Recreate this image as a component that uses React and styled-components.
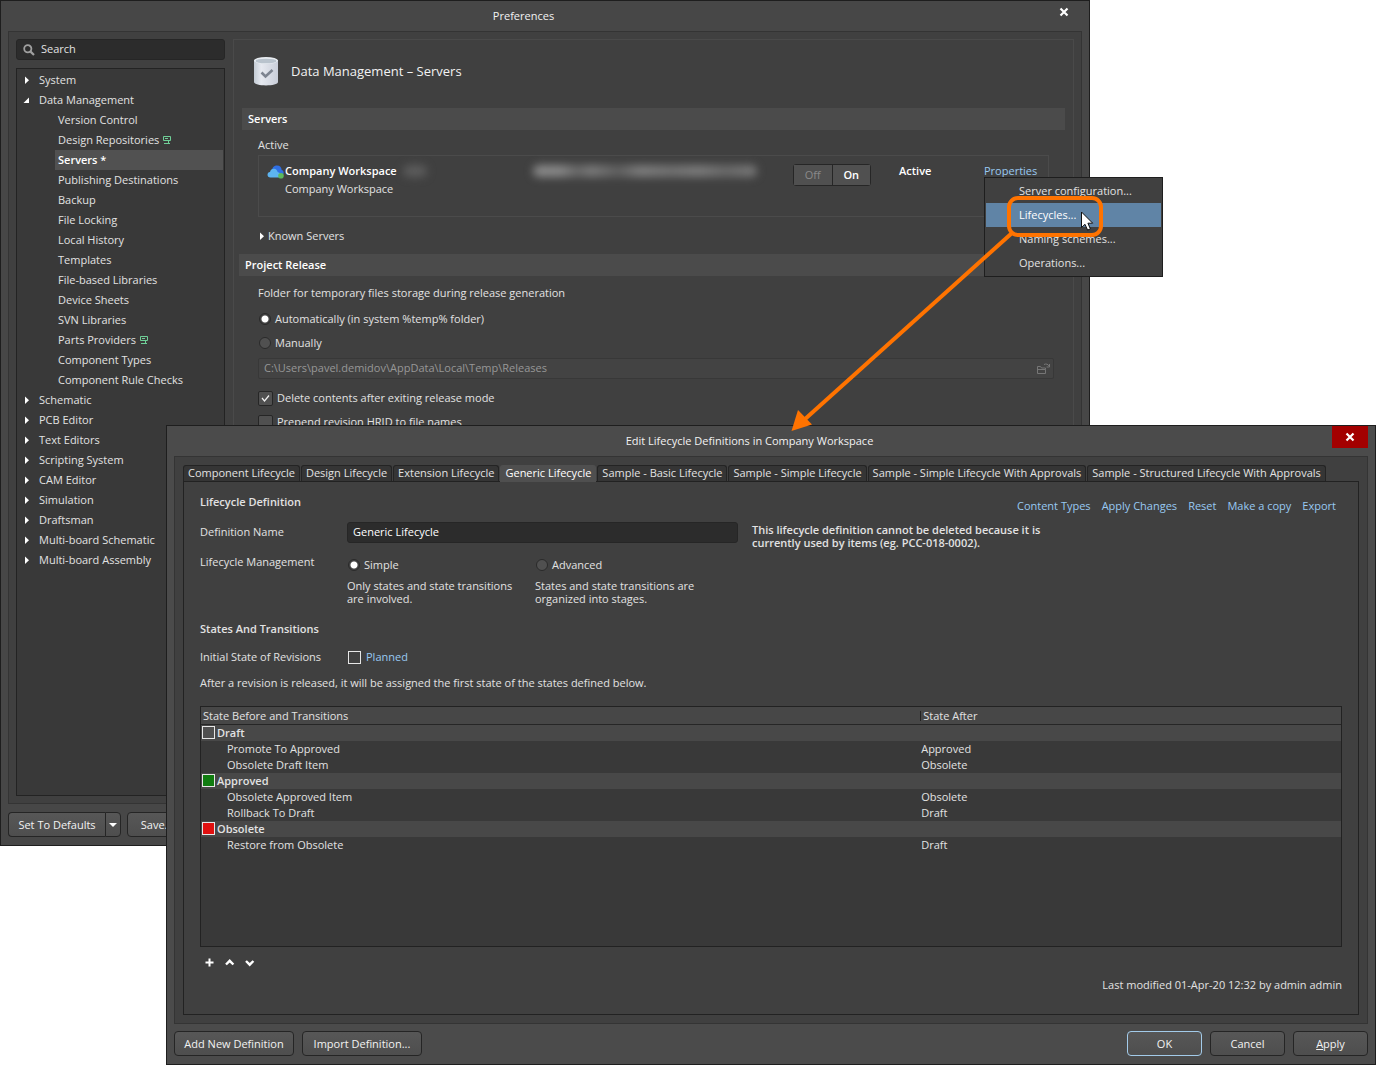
import React from 'react'
import styled, { createGlobalStyle, css } from 'styled-components'

const GlobalStyle = createGlobalStyle`
    * {
        box-sizing: border-box;
    }
    body {
        margin: 0;
        background: #ffffff;
        color: #e2e2e2;
        font-family: "Open Sans", "Noto Sans", sans-serif;
        font-size: 11px;
        line-height: 18px;
    }
    button, input {
        font: inherit;
        color: inherit;
        margin: 0;
    }
    h1, h2, p, ul {
        margin: 0;
        padding: 0;
        font-size: inherit;
        font-weight: inherit;
    }
    ul {
        list-style: none;
    }
    svg {
        display: block;
        flex: none;
    }
`

const Desktop = styled.div`
    position: relative;
    min-height: 100vh;
    padding: 425px 0 0 166px;
`

const Window = styled.section`
    display: flex;
    flex-direction: column;
    border: 1px solid #1e1e1e;
    background: #4b4b4b;
`

const PreferencesWindow = styled(Window)`
    position: absolute;
    top: 0;
    left: 0;
    right: 286px;
    background: #474747;
`

const DialogWindow = styled(Window)`
    position: relative;
    z-index: 1;
    min-height: calc(100vh - 425px);
`

const TitleBar = styled.header`
    display: flex;
    height: 30px;
    padding-right: 7px;
`

const Title = styled.h1`
    flex: 1;
    text-align: center;
    line-height: 30px;
    color: #f2f2f2;
`

const CloseButton = styled.button`
    display: flex;
    align-items: center;
    justify-content: center;
    width: 36px;
    height: 22px;
    padding: 0;
    border: none;
    background: ${p => (p.$danger ? '#a30000' : 'transparent')};
`

const Frame = styled.div`
    display: flex;
    flex: 1;
    margin: 0 7px;
    padding: ${p => p.$pad}px;
    border: 1px solid #343434;
    background: #404040;
`

const Footer = styled.footer`
    display: flex;
    gap: ${p => p.$gap}px;
    padding: ${p => p.$top}px 7px 8px;
`

const Spacer = styled.div`
    flex: 1;
`

const Button = styled.button`
    width: ${p => p.$width}px;
    height: 25px;
    padding: 0;
    border: 1px solid ${p => (p.$primary ? '#a3cbea' : '#252525')};
    border-radius: 4px;
    background: linear-gradient(#575757, #4e4e4e);
    color: #f2f2f2;
    text-align: center;
`

const SplitButton = styled.div`
    display: flex;
    ${Button}:first-child {
        border-radius: 4px 0 0 4px;
        border-right: none;
    }
    ${Button}:last-child {
        border-radius: 0 4px 4px 0;
        display: flex;
        align-items: center;
        justify-content: center;
    }
`

const Sidebar = styled.nav`
    display: flex;
    flex-direction: column;
    gap: 8px;
    width: 209px;
    margin-right: 8px;
`

const SearchBox = styled.label`
    display: flex;
    align-items: center;
    height: 21px;
    padding-left: 6px;
    gap: 6px;
    border: 1px solid #262626;
    border-radius: 3px;
    background: #2c2c2c;
    input {
        flex: 1;
        min-width: 0;
        padding: 0 0 2px;
        border: none;
        outline: none;
        background: none;
        &::placeholder {
            color: #e2e2e2;
            opacity: 1;
        }
    }
`

const Tree = styled.ul`
    flex: 1;
    min-height: 728px;
    padding: 1px 0;
    border: 1px solid #232323;
    background: #393939;
`

const TreeRow = styled.li`
    display: flex;
    align-items: center;
    height: 20px;
    gap: 6px;
    padding-left: 6px;
    ${p => p.$nested && css`
        margin: 0 1px 0 38px;
        padding-left: 3px;
        gap: 4px;
    `}
    ${p => p.$selected && css`
        background: #515151;
        color: #ffffff;
        font-weight: 600;
    `}
`

const SettingsPanel = styled.main`
    flex: 1;
    min-width: 0;
    padding: 0 8px 0 5px;
    border: 1px solid #4a4a4a;
    border-bottom: none;
`

const PanelHeading = styled.div`
    display: flex;
    align-items: center;
    height: 62px;
    margin-bottom: 6px;
    padding-left: 15px;
    gap: 13px;
    font-size: 13px;
    color: #f2f2f2;
`

const ServersSection = styled.section`
    padding-left: 3px;
`

const ReleaseSection = styled.section`
    padding-right: 3px;
`

const SectionTitle = styled.h2`
    height: 22px;
    padding-left: 6px;
    line-height: 22px;
    background: #4b4b4b;
    color: #ffffff;
    font-weight: 600;
`

const ServersBody = styled.div`
    padding: 6px 16px 8px;
`

const ServerCard = styled.div`
    display: flex;
    height: 62px;
    margin: 1px 0 9px;
    padding: 6px 0 0 8px;
    border: 1px solid #4b4b4b;
`

const ServerName = styled.div`
    display: flex;
    flex: 1;
    min-width: 0;
    svg {
        margin-top: 3px;
    }
    strong {
        display: flex;
        gap: 6px;
        color: #ffffff;
        font-weight: 600;
    }
`

const Redacted = styled.span`
    width: ${p => p.$width}px;
    height: 12px;
    margin-top: 3px;
    border-radius: 6px;
    background: ${p => p.$color};
    filter: blur(4px);
`

const ServerCell = styled.div`
    position: relative;
    width: ${p => p.$width}px;
    color: #ffffff;
    font-weight: ${p => (p.$bold ? 600 : 'normal')};
`

const Toggle = styled.div`
    display: flex;
    width: 78px;
    margin-top: 2px;
    border: 1px solid #262626;
    border-radius: 3px;
`

const ToggleButton = styled.button`
    flex: 1;
    height: 20px;
    padding: 0;
    border: none;
    background: #505050;
    color: ${p => (p.$on ? '#ffffff' : '#8a8a8a')};
    font-weight: ${p => (p.$on ? 600 : 'normal')};
    & + & {
        border-left: 1px solid #262626;
    }
`

const Link = styled.a`
    color: #98c9f2;
    text-decoration: none;
    white-space: nowrap;
`

const Expander = styled.button`
    display: flex;
    align-items: center;
    height: 20px;
    padding: 0;
    border: none;
    background: none;
`

const ReleaseBody = styled.div`
    padding: 8px 8px 0 19px;
`

const OptionRow = styled.label`
    display: flex;
    align-items: center;
    gap: 4px;
    height: ${p => p.$height || 24}px;
    ${p => p.$indent && css`
        padding-left: 1px;
    `}
`

const OptionGroup = styled.div`
    margin: 5px 0 3px;
`

const Radio = styled.input.attrs({ type: 'radio' })`
    appearance: none;
    width: 12px;
    height: 12px;
    border: 1px solid #2a2a2a;
    border-radius: 50%;
    background: #505050;
    &:checked {
        background: radial-gradient(circle, #ffffff 3px, #444444 4px);
    }
`

const Checkbox = styled.span`
    position: relative;
    display: flex;
    align-items: center;
    justify-content: center;
    width: 15px;
    height: 15px;
    input {
        position: absolute;
        inset: 0;
        appearance: none;
        border: 1px solid #262626;
        border-radius: 2px;
        background: #505050;
    }
    svg {
        position: relative;
        pointer-events: none;
    }
`

const PathField = styled.div`
    display: flex;
    align-items: center;
    height: 21px;
    margin-bottom: 7px;
    padding: 0 2px 0 5px;
    border: 1px solid #383838;
    border-radius: 2px;
    background: #434343;
    input {
        flex: 1;
        min-width: 0;
        padding: 0 0 2px;
        border: none;
        background: none;
        color: #979797;
    }
`

const Menu = styled.ul`
    position: absolute;
    z-index: 2;
    top: 15px;
    left: 0;
    width: 179px;
    padding: 1px;
    border: 1px solid #1e1e1e;
    background: #404040;
`

const MenuItem = styled.button`
    display: block;
    width: 100%;
    height: 24px;
    padding: 0 0 0 33px;
    border: none;
    background: ${p => (p.$active ? '#6084a6' : 'transparent')};
    color: ${p => (p.$active ? '#ffffff' : '#e2e2e2')};
    text-align: left;
`

const Callout = styled.svg`
    position: absolute;
    top: 17px;
    left: -200px;
    pointer-events: none;
`

const TabArea = styled.div`
    display: flex;
    flex-direction: column;
    flex: 1;
    min-width: 0;
`

const Tabs = styled.div`
    display: flex;
    gap: 1px;
    height: 16px;
`

const Tab = styled.button`
    height: 16px;
    padding: 0 4px 2px;
    border: 1px solid #242424;
    border-bottom: none;
    border-radius: 3px 3px 0 0;
    background: #353535;
    line-height: 14px;
    white-space: nowrap;
    ${p => p.$active && css`
        z-index: 1;
        height: 17px;
        padding-bottom: 3px;
        border-color: #4f4f4f;
        background: #4f4f4f;
        color: #ffffff;
    `}
`

const TabPanel = styled.div`
    display: flex;
    flex-direction: column;
    flex: 1;
    padding: 11px 16px 20px;
    border: 1px solid #222222;
    background: #404040;
`

const PanelTop = styled.div`
    display: flex;
    justify-content: space-between;
    height: 22px;
    margin-bottom: 7px;
`

const Actions = styled.div`
    display: flex;
    align-self: flex-end;
    gap: 11px;
    padding-right: 6px;
`

const Subheading = styled.h2`
    font-weight: 600;
`

const FormRow = styled.div`
    display: grid;
    grid-template-columns: 147px 391px 1fr;
    min-height: ${p => p.$height}px;
    > label {
        line-height: 20px;
    }
`

const NameInput = styled.input`
    height: 21px;
    padding: 0 5px 2px;
    border: 1px solid #262626;
    border-radius: 3px;
    background: #2c2c2c;
    color: #ffffff;
`

const Note = styled.p`
    max-width: 320px;
    padding: 1px 0 0 14px;
    line-height: 13px;
    font-weight: 600;
`

const Modes = styled.div`
    display: grid;
    grid-template-columns: 188px 188px;
    padding-top: 3px;
    p {
        max-width: 172px;
        margin-top: 5px;
        line-height: 13px;
    }
`

const InitialState = styled.div`
    display: flex;
    align-items: center;
    gap: 5px;
    margin: 10px 0 8px;
    line-height: 18px;
    > span:first-child {
        width: 143px;
    }
`

const Swatch = styled.span`
    flex: none;
    width: 13px;
    height: 13px;
    border: 1px solid #e6e6e6;
    background: ${p => p.$color};
`

const TableBox = styled.div`
    flex: 1;
    min-height: 160px;
    margin-top: 14px;
    border: 1px solid #222222;
    background: #393939;
`

const StatesTable = styled.table`
    width: 100%;
    border-spacing: 0;
    table-layout: fixed;
    line-height: 16px;
    th, td {
        height: 16px;
        padding: 0 0 0 2px;
        text-align: left;
    }
    thead th {
        height: 18px;
        border-bottom: 1px solid #262626;
        background: #474747;
        font-weight: normal;
        line-height: 17px;
    }
    thead th:first-child {
        width: 63%;
    }
    thead th + th {
        background: linear-gradient(#222222, #222222) 1px 4px / 1px 10px no-repeat #474747;
        padding-left: 4px;
    }
    tbody th {
        padding-left: 1px;
        background: #484848;
        font-weight: 600;
    }
    tbody td:first-child {
        padding-left: 26px;
    }
`

const StateName = styled.span`
    display: flex;
    align-items: center;
    height: 16px;
    gap: 2px;
    ${Swatch} {
        margin-bottom: 1px;
    }
`

const Toolbar = styled.div`
    display: flex;
    margin: 6px 0 3px;
    button {
        display: flex;
        align-items: center;
        justify-content: center;
        width: 20px;
        height: 20px;
        padding: 0;
        border: none;
        background: none;
    }
`

const Modified = styled.p`
    text-align: right;
`

const TREE = [
    { label: 'System' },
    {
        label: 'Data Management',
        children: [
            { label: 'Version Control' },
            { label: 'Design Repositories', badge: true },
            { label: 'Servers *', selected: true },
            { label: 'Publishing Destinations' },
            { label: 'Backup' },
            { label: 'File Locking' },
            { label: 'Local History' },
            { label: 'Templates' },
            { label: 'File-based Libraries' },
            { label: 'Device Sheets' },
            { label: 'SVN Libraries' },
            { label: 'Parts Providers', badge: true },
            { label: 'Component Types' },
            { label: 'Component Rule Checks' },
        ],
    },
    { label: 'Schematic' },
    { label: 'PCB Editor' },
    { label: 'Text Editors' },
    { label: 'Scripting System' },
    { label: 'CAM Editor' },
    { label: 'Simulation' },
    { label: 'Draftsman' },
    { label: 'Multi-board Schematic' },
    { label: 'Multi-board Assembly' },
]

const TABS = [
    'Component Lifecycle',
    'Design Lifecycle',
    'Extension Lifecycle',
    'Generic Lifecycle',
    'Sample - Basic Lifecycle',
    'Sample - Simple Lifecycle',
    'Sample - Simple Lifecycle With Approvals',
    'Sample - Structured Lifecycle With Approvals',
]

const STATES = [
    {
        name: 'Draft',
        color: '#505050',
        transitions: [['Promote To Approved', 'Approved'], ['Obsolete Draft Item', 'Obsolete']],
    },
    {
        name: 'Approved',
        color: '#107c10',
        transitions: [['Obsolete Approved Item', 'Obsolete'], ['Rollback To Draft', 'Draft']],
    },
    {
        name: 'Obsolete',
        color: '#e01010',
        transitions: [['Restore from Obsolete', 'Draft']],
    },
]

const CloseIcon = () => (
    <svg width="10" height="10" viewBox="0 0 10 10" stroke="#fff" strokeWidth="2.2">
        <path d="M1.5 1.5l7 7M8.5 1.5l-7 7" />
    </svg>
)

const ArrowIcon = ({ open }) => (
    <svg width="10" height="10" viewBox="0 0 10 10" fill="#fff">
        {open ? <path d="M6 2.500v5.500H.5z" /> : <path d="M2 1.500L6 5.300 2 9z" />}
    </svg>
)

const SearchIcon = () => (
    <svg width="12" height="12" viewBox="0 0 12 12" fill="none" stroke="#a0a0a0">
        <circle cx="4.8" cy="4.8" r="3.6" strokeWidth="1.800" />
        <path d="M7.6 7.6l3.4 3.4" strokeWidth="2.200" />
    </svg>
)

const BadgeIcon = () => (
    <svg width="8" height="8" viewBox="0 0 8 8" fill="none" stroke="#6fcf97">
        <path d="M.5.5h7v4h-7zM2 2.500h3M5.500 4.500v3M1 7.500h6" />
    </svg>
)

const DatabaseIcon = () => (
    <svg width="24" height="29" viewBox="0 0 24 29">
        <defs>
            <linearGradient id="drum" x1="0" x2="1" y1="0" y2="0">
                <stop offset="0" stopColor="#c3cbd4" />
                <stop offset="0.3" stopColor="#e6e9f0" />
                <stop offset="1" stopColor="#c9ced9" />
            </linearGradient>
        </defs>
        <path d="M0 3v22c0 4.500 24 4.500 24 0V3z" fill="url(#drum)" />
        <ellipse cx="12" cy="3.500" rx="12" ry="3.500" fill="#e9edf2" />
        <ellipse cx="12" cy="4" rx="10.500" ry="2.300" fill="#b9c3cd" />
        <path d="M7.500 15.500l4 4 7-6.500" fill="none" stroke="#7d8490" strokeWidth="2.6" />
    </svg>
)

const CloudIcon = () => (
    <svg width="18" height="14" viewBox="0 0 18 14">
        <path d="M5 6C5 2 7.500.5 10 .5c3 0 4.500 2 4.700 4.500C16.500 5.500 17 7 16.500 9L11 12z" fill="#2f6fe4" />
        <path d="M3.500 12.500C1.500 12.500.5 11.200.5 9.700c0-1.500 1-2.500 2.500-2.700C3.500 4.800 5 3.700 7 3.800c2 .1 3.300 1.400 3.600 3.200 1.500.3 3.400 1.500 3.400 5.500z" fill="#5db4f0" />
        <circle cx="14" cy="10.800" r="2.800" fill="#5bb85d" />
    </svg>
)

const FolderIcon = () => (
    <svg width="14" height="12" viewBox="0 0 14 12" fill="none" stroke="#767676">
        <path d="M.5 10.500v-7h3l1 1.500h4v1.500M.5 10.500h8v-4h-8M7 1.500c2-1 4-.5 5.500 2M12.500 1v3h-3" />
    </svg>
)

const CheckIcon = () => (
    <svg width="9" height="9" viewBox="0 0 9 9" fill="none" stroke="#f0f0f0">
        <path d="M1 4l2.500 3L8 1.500" strokeWidth="1.200" />
    </svg>
)

const NavTree = () => (
    <Tree>
        {TREE.map(group => (
            <React.Fragment key={group.label}>
                <TreeRow>
                    <ArrowIcon open={Boolean(group.children)} />
                    {group.label}
                </TreeRow>
                {(group.children || []).map(item => (
                    <TreeRow key={item.label} $nested $selected={item.selected}>
                        {item.label}
                        {item.badge && <BadgeIcon />}
                    </TreeRow>
                ))}
            </React.Fragment>
        ))}
    </Tree>
)

const PropertiesMenu = () => (
    <Menu>
        <li><MenuItem>Server configuration...</MenuItem></li>
        <li><MenuItem $active>Lifecycles...</MenuItem></li>
        <li><MenuItem>Naming schemes...</MenuItem></li>
        <li><MenuItem>Operations...</MenuItem></li>
        <Callout width="320" height="240" viewBox="785 195 320 240">
            <rect x="1009" y="198" width="92" height="37" rx="9" fill="none" stroke="#ff7300" strokeWidth="4" />
            <path d="M1012 233L804 420" stroke="#ff7300" strokeWidth="4" />
            <path d="M791.500 431l6.500-21 14 14.500z" fill="#ff7300" />
            <path
                d="M1081.500 212v15.500l3.500-3.200 2.600 5.800 2.800-1.200-2.500-5.700h4.800z"
                fill="#fff"
                stroke="#111"
            />
        </Callout>
    </Menu>
)

const Preferences = () => (
    <PreferencesWindow>
        <TitleBar>
            <Title>Preferences</Title>
            <CloseButton aria-label="Close preferences"><CloseIcon /></CloseButton>
        </TitleBar>
        <Frame $pad={7}>
            <Sidebar>
                <SearchBox>
                    <SearchIcon />
                    <input placeholder="Search" aria-label="Search" />
                </SearchBox>
                <NavTree />
            </Sidebar>
            <SettingsPanel>
                <PanelHeading>
                    <DatabaseIcon />
                    Data Management – Servers
                </PanelHeading>
                <ServersSection>
                    <SectionTitle>Servers</SectionTitle>
                    <ServersBody>
                        Active
                        <ServerCard>
                            <ServerName>
                                <CloudIcon />
                                <div>
                                    <strong>
                                        Company Workspace
                                        <Redacted $width={24} $color="#5c5c5c" />
                                    </strong>
                                    Company Workspace
                                </div>
                            </ServerName>
                            <ServerCell $width={260}>
                                <Redacted
                                    as="div"
                                    $width={224}
                                    $color="linear-gradient(90deg, #8a8a8a 12%, #686868 20%, #7c7c7c 26%, #606060 38%, #7e7e7e 48%, #727272 62%, #7c7c7c 74%, #6a6a6a 86%, #7a7a7a)"
                                />
                            </ServerCell>
                            <ServerCell $width={106}>
                                <Toggle>
                                    <ToggleButton>Off</ToggleButton>
                                    <ToggleButton $on>On</ToggleButton>
                                </Toggle>
                            </ServerCell>
                            <ServerCell $width={85} $bold>Active</ServerCell>
                            <ServerCell $width={64}>
                                <Link href="#properties">Properties</Link>
                                <PropertiesMenu />
                            </ServerCell>
                        </ServerCard>
                        <Expander><ArrowIcon />Known Servers</Expander>
                    </ServersBody>
                </ServersSection>
                <ReleaseSection>
                    <SectionTitle>Project Release</SectionTitle>
                    <ReleaseBody>
                        <p>Folder for temporary files storage during release generation</p>
                        <OptionGroup>
                            <OptionRow $indent>
                                <Radio name="folder" defaultChecked />
                                Automatically (in system %temp% folder)
                            </OptionRow>
                            <OptionRow $indent>
                                <Radio name="folder" />
                                Manually
                            </OptionRow>
                        </OptionGroup>
                        <PathField>
                            <input
                                aria-label="Release folder"
                                defaultValue="C:\Users\pavel.demidov\AppData\Local\Temp\Releases"
                                disabled
                            />
                            <FolderIcon />
                        </PathField>
                        <OptionRow>
                            <Checkbox><input type="checkbox" defaultChecked /><CheckIcon /></Checkbox>
                            Delete contents after exiting release mode
                        </OptionRow>
                        <OptionRow>
                            <Checkbox><input type="checkbox" /></Checkbox>
                            Prepend revision HRID to file names
                        </OptionRow>
                    </ReleaseBody>
                </ReleaseSection>
            </SettingsPanel>
        </Frame>
        <Footer $gap={6} $top={8}>
            <SplitButton>
                <Button $width={97}>Set To Defaults</Button>
                <Button $width={16} aria-label="More defaults">
                    <svg width="8" height="4" viewBox="0 0 8 4" fill="#fff"><path d="M0 0h8L4 4z" /></svg>
                </Button>
            </SplitButton>
            <Button $width={60}>Save...</Button>
        </Footer>
    </PreferencesWindow>
)

const StateRows = ({ state }) => (
    <>
        <tr>
            <th colSpan={2}>
                <StateName><Swatch $color={state.color} />{state.name}</StateName>
            </th>
        </tr>
        {state.transitions.map(([name, after]) => (
            <tr key={name}>
                <td>{name}</td>
                <td>{after}</td>
            </tr>
        ))}
    </>
)

const LifecycleDialog = () => (
    <DialogWindow>
        <TitleBar>
            <Title>Edit Lifecycle Definitions in Company Workspace</Title>
            <CloseButton $danger aria-label="Close dialog"><CloseIcon /></CloseButton>
        </TitleBar>
        <Frame $pad={8}>
            <TabArea>
                <Tabs role="tablist">
                    {TABS.map(tab => (
                        <Tab key={tab} role="tab" $active={tab === 'Generic Lifecycle'}>{tab}</Tab>
                    ))}
                </Tabs>
                <TabPanel>
                    <PanelTop>
                        <Subheading>Lifecycle Definition</Subheading>
                        <Actions>
                            <Link href="#types">Content Types</Link>
                            <Link href="#apply">Apply Changes</Link>
                            <Link href="#reset">Reset</Link>
                            <Link href="#copy">Make a copy</Link>
                            <Link href="#export">Export</Link>
                        </Actions>
                    </PanelTop>
                    <FormRow $height={31}>
                        <label htmlFor="definition">Definition Name</label>
                        <NameInput id="definition" defaultValue="Generic Lifecycle" />
                        <Note>
                            This lifecycle definition cannot be deleted because it is<br />
                            currently used by items (eg. PCC-018-0002).
                        </Note>
                    </FormRow>
                    <FormRow $height={67}>
                        <span>Lifecycle Management</span>
                        <Modes>
                            <div>
                                <OptionRow $height={18} $indent>
                                    <Radio name="mode" defaultChecked />
                                    Simple
                                </OptionRow>
                                <p>Only states and state transitions<br />are involved.</p>
                            </div>
                            <div>
                                <OptionRow $height={18} $indent>
                                    <Radio name="mode" />
                                    Advanced
                                </OptionRow>
                                <p>States and state transitions are<br />organized into stages.</p>
                            </div>
                        </Modes>
                    </FormRow>
                    <Subheading>States And Transitions</Subheading>
                    <InitialState>
                        <span>Initial State of Revisions</span>
                        <Swatch $color="transparent" />
                        <Link href="#planned">Planned</Link>
                    </InitialState>
                    <p>After a revision is released, it will be assigned the first state of the states defined below.</p>
                    <TableBox>
                        <StatesTable>
                            <thead>
                                <tr>
                                    <th>State Before and Transitions</th>
                                    <th>State After</th>
                                </tr>
                            </thead>
                            <tbody>
                                {STATES.map(state => <StateRows key={state.name} state={state} />)}
                            </tbody>
                        </StatesTable>
                    </TableBox>
                    <Toolbar>
                        <button aria-label="Add state">
                            <svg width="10" height="10" viewBox="0 0 10 10" stroke="#fff" strokeWidth="2"><path d="M4.500.5v8M.5 4.500h8" /></svg>
                        </button>
                        <button aria-label="Move up">
                            <svg width="10" height="8" viewBox="0 0 10 8" fill="none" stroke="#fff" strokeWidth="2.400"><path d="M1 5.500l3.700-3.700 3.700 3.700" /></svg>
                        </button>
                        <button aria-label="Move down">
                            <svg width="10" height="8" viewBox="0 0 10 8" fill="none" stroke="#fff" strokeWidth="2.400"><path d="M1 2l3.700 3.700L8.400 2" /></svg>
                        </button>
                    </Toolbar>
                    <Modified>Last modified 01-Apr-20 12:32 by admin admin</Modified>
                </TabPanel>
            </TabArea>
        </Frame>
        <Footer $gap={8} $top={7}>
            <Button $width={120}>Add New Definition</Button>
            <Button $width={120}>Import Definition...</Button>
            <Spacer />
            <Button $width={75} $primary>OK</Button>
            <Button $width={75}>Cancel</Button>
            <Button $width={75}><u>A</u>pply</Button>
        </Footer>
    </DialogWindow>
)

const App = () => (
    <Desktop>
        <GlobalStyle />
        <Preferences />
        <LifecycleDialog />
    </Desktop>
)

export default App
